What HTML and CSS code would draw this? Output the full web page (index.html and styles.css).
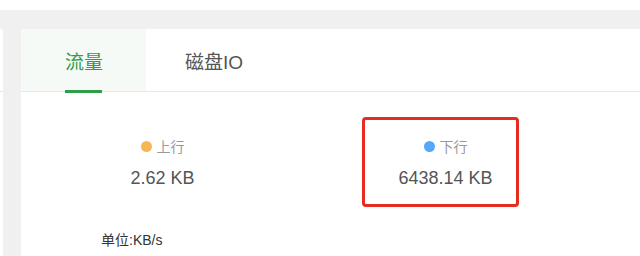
FILE: index.html
```html
<!DOCTYPE html>
<html lang="zh-CN">
<head>
<meta charset="utf-8">
<title>流量</title>
<link rel="stylesheet" href="styles.css">
</head>
<body>
<div class="topbar"></div>
<div class="main">
  <div class="side-card">
    <div class="side-head"></div>
  </div>
  <div class="card">
    <div class="tabs">
      <div class="tab active"><span class="tab-label">流量</span></div>
      <div class="tab second"><span class="tab-label">磁盘IO</span></div>
    </div>
    <div class="body">
      <div class="stats">
        <div class="stat">
          <div class="stat-label"><span class="dot up"></span><span>上行</span></div>
          <div class="stat-value">2.62 KB</div>
        </div>
        <div class="stat">
          <div class="stat-label"><span class="dot down"></span><span>下行</span></div>
          <div class="stat-value">6438.14 KB</div>
        </div>
        <div class="highlight"></div>
      </div>
      <div class="unit">单位:KB/s</div>
    </div>
  </div>
</div>
</body>
</html>
```
FILE: styles.css
```css
html, body {
  margin: 0;
  padding: 0;
  width: 640px;
  height: 256px;
  overflow: hidden;
  background: #ffffff;
  font-family: "Liberation Sans", "Noto Sans CJK SC", sans-serif;
}

.topbar {
  height: 10px;
  background: #ffffff;
}

.main {
  display: flex;
  background: #f0f0f0;
  padding-top: 19px;
  height: 227px;
  overflow: hidden;
}

.side-card {
  flex: 0 0 3px;
  background: #ffffff;
  border-top-right-radius: 3px;
}

.side-head {
  height: 62px;
  border-bottom: 1px solid #e6e6e6;
}

.card {
  flex: 0 0 1200px;
  margin-left: 18px;
  background: #ffffff;
  border-top-left-radius: 4px;
}

.tabs {
  display: flex;
  height: 62px;
  border-bottom: 1px solid #e8e8e8;
}

.tab {
  position: relative;
  display: flex;
  align-items: center;
  padding: 0 43px 0 44px;
  font-size: 19px;
  color: #555555;
}

.tab.active {
  background: #f5faf7;
  color: #2e9e4b;
  border-top-left-radius: 4px;
}

.tab.active::after {
  content: "";
  position: absolute;
  left: 44px;
  right: 44px;
  bottom: -2px;
  height: 3px;
  background: #2e9e48;
}

.tab.second {
  padding-left: 39px;
}

.body {
  padding: 44px 0 0 0;
}

.stats {
  position: relative;
  display: grid;
  grid-template-columns: 283px 283px;
  row-gap: 0;
}

.stat {
  display: flex;
  flex-direction: column;
  align-items: center;
  gap: 10px;
}

.stat-label {
  display: flex;
  align-items: center;
  gap: 5px;
  height: 20px;
  font-size: 14px;
  color: #999999;
}

.dot {
  width: 11px;
  height: 11px;
  border-radius: 50%;
}

.dot.up {
  background: #f6b951;
}

.dot.down {
  background: #57a7f7;
}

.stat-value {
  height: 24px;
  line-height: 24px;
  font-size: 18px;
  color: #555555;
}

.highlight {
  position: absolute;
  left: 341px;
  top: -19px;
  width: 151px;
  height: 84px;
  border: 3px solid #e62b21;
  border-radius: 4px;
}

.unit {
  margin-top: 40px;
  padding-left: 80px;
  height: 20px;
  line-height: 20px;
  font-size: 14px;
  color: #333333;
}
```
